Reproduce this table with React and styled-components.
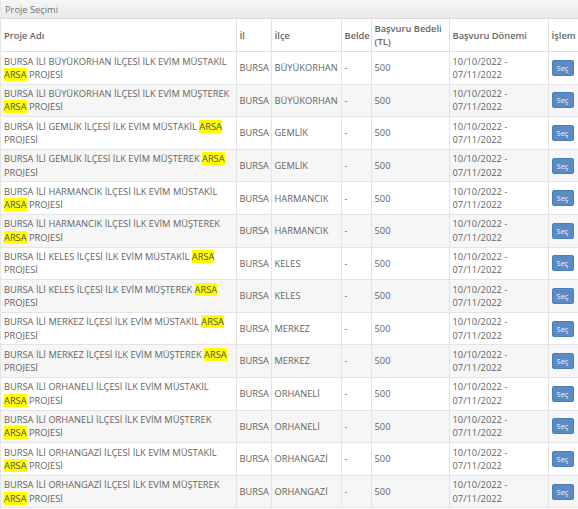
import React from 'react';
import styled, { createGlobalStyle } from 'styled-components';

const GlobalStyle = createGlobalStyle`
  html, body { margin: 0; padding: 0; background: #fff; }
  body { font-family: "Open Sans", "Liberation Sans", sans-serif; }
`;

const Panel = styled.div`
  width: 578px;
  border-left: 1px solid #e6e6e6;
  box-sizing: border-box;
`;

const PanelHeading = styled.div`
  height: 19px;
  box-sizing: border-box;
  padding: 0 4px;
  display: flex;
  align-items: center;
  font-size: 9.3px;
  color: #707070;
  background: linear-gradient(#f6f6f6, #e9e9e9);
  border-bottom: 1px solid #dcdcdc;
`;

const Table = styled.table`
  width: 100%;
  table-layout: fixed;
  border-collapse: collapse;
  font-size: 9.3px;
  color: #646464;
`;

const Th = styled.th`
  text-align: left;
  font-weight: 600;
  color: #666;
  height: 32px;
  padding: 0 3px;
  line-height: 13px;
  vertical-align: middle;
  border-left: 1px solid #e4e4e4;
  border-bottom: 1px solid #dedede;
  &:first-child { border-left: none; }
`;

const Row = styled.tr`
  background: ${p => (p.$odd ? '#f6f6f6' : '#fff')};
`;

const Td = styled.td`
  padding: 2.5px 2px 2.5px 3px;
  height: 26.6px;
  line-height: 13.3px;
  vertical-align: middle;
  border-left: 1px solid #e4e4e4;
  border-bottom: 1px solid #e4e4e4;
  white-space: ${p => (p.$nowrap ? 'nowrap' : 'normal')};
  &:first-child { border-left: none; }
`;

const Mark = styled.span`
  background: #ffff00;
  color: #505050;
`;

const SelectButton = styled.button`
  display: block;
  width: 22px;
  height: 16px;
  padding: 0;
  border: 1px solid #4b7eb5;
  border-radius: 2px;
  background: #5a8bc4;
  color: #f2f6fb;
  font-family: "Open Sans", "Liberation Sans", sans-serif;
  font-size: 7.5px;
  line-height: 14px;
  text-align: center;
`;

const ilceler = ['BÜYÜKORHAN', 'GEMLİK', 'HARMANCIK', 'KELES', 'MERKEZ', 'ORHANELİ', 'ORHANGAZİ'];

const rows = [];
ilceler.forEach(ilce => {
  rows.push({ ilce, type: 'MÜSTAKİL' });
  rows.push({ ilce, type: 'MÜŞTEREK' });
});

const widths = [235, 35, 70, 30, 78, 99, 31];

export default function App() {
  return (
    <>
      <GlobalStyle />
      <Panel>
        <PanelHeading>Proje Seçimi</PanelHeading>
        <Table>
          <colgroup>
            {widths.map((w, i) => (
              <col key={i} style={{ width: w }} />
            ))}
          </colgroup>
          <thead>
            <tr>
              <Th>Proje Adı</Th>
              <Th>İl</Th>
              <Th>İlçe</Th>
              <Th>Belde</Th>
              <Th>Başvuru Bedeli (TL)</Th>
              <Th>Başvuru Dönemi</Th>
              <Th>İşlem</Th>
            </tr>
          </thead>
          <tbody>
            {rows.map((r, i) => (
              <Row key={i} $odd={i % 2 === 1}>
                <Td>
                  BURSA İLİ {r.ilce} İLÇESİ İLK EVİM {r.type} <Mark>ARSA</Mark> PROJESİ
                </Td>
                <Td>BURSA</Td>
                <Td $nowrap>{r.ilce}</Td>
                <Td>-</Td>
                <Td>500</Td>
                <Td>
                  10/10/2022 -<br />07/11/2022
                </Td>
                <Td>
                  <SelectButton>Seç</SelectButton>
                </Td>
              </Row>
            ))}
          </tbody>
        </Table>
      </Panel>
    </>
  );
}
